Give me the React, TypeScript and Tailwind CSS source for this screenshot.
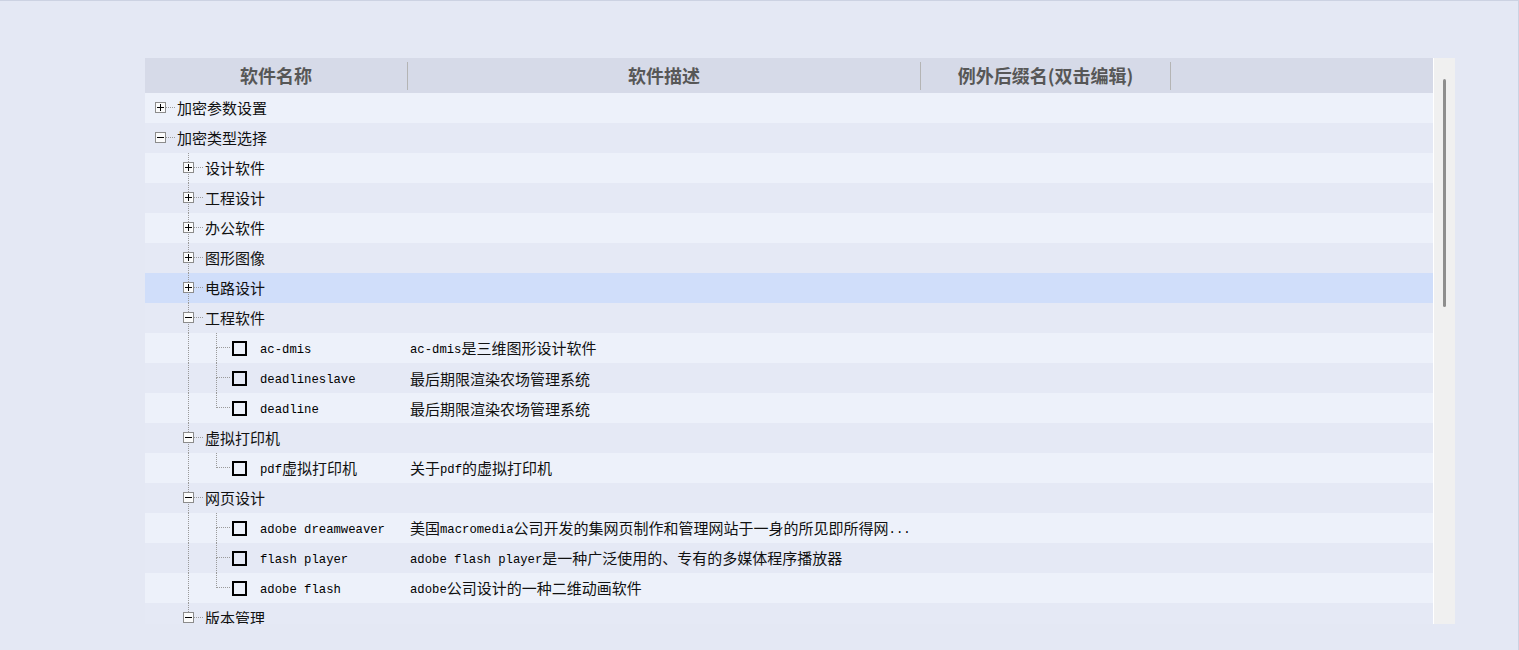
import React from 'react';

type Kind = 'open' | 'closed' | 'leaf';

interface TreeRow {
  name: string;
  desc?: string;
  level: number;
  kind: Kind;
}

const rows: TreeRow[] = [
  { name: '加密参数设置', level: 0, kind: 'closed' },
  { name: '加密类型选择', level: 0, kind: 'open' },
  { name: '设计软件', level: 1, kind: 'closed' },
  { name: '工程设计', level: 1, kind: 'closed' },
  { name: '办公软件', level: 1, kind: 'closed' },
  { name: '图形图像', level: 1, kind: 'closed' },
  { name: '电路设计', level: 1, kind: 'closed' },
  { name: '工程软件', level: 1, kind: 'open' },
  { name: 'ac-dmis', desc: 'ac-dmis是三维图形设计软件', level: 2, kind: 'leaf' },
  { name: 'deadlineslave', desc: '最后期限渲染农场管理系统', level: 2, kind: 'leaf' },
  { name: 'deadline', desc: '最后期限渲染农场管理系统', level: 2, kind: 'leaf' },
  { name: '虚拟打印机', level: 1, kind: 'open' },
  { name: 'pdf虚拟打印机', desc: '关于pdf的虚拟打印机', level: 2, kind: 'leaf' },
  { name: '网页设计', level: 1, kind: 'open' },
  {
    name: 'adobe dreamweaver',
    desc: '美国macromedia公司开发的集网页制作和管理网站于一身的所见即所得网...',
    level: 2,
    kind: 'leaf',
  },
  { name: 'flash player', desc: 'adobe flash player是一种广泛使用的、专有的多媒体程序播放器', level: 2, kind: 'leaf' },
  { name: 'adobe flash', desc: 'adobe公司设计的一种二维动画软件', level: 2, kind: 'leaf' },
  { name: '版本管理', level: 1, kind: 'open' },
];

const SELECTED = 6;

// true when a later row sits at `level` before the tree climbs above it
const continues = (i: number, level: number) => {
  for (let j = i + 1; j < rows.length; j++) {
    if (rows[j].level < level) return false;
    if (rows[j].level === level) return true;
  }
  return false;
};

const DOT = '#9a9a9a';

// one 28px indent column of the tree connector lines
const LineCell: React.FC<{ top?: boolean; bottom?: boolean; branch?: boolean; box?: 'plus' | 'minus' }> = ({
  top,
  bottom,
  branch,
  box,
}) => (
  <svg width="28" height="30" className="shrink-0">
    {top && <line x1="13.5" y1="0" x2="13.5" y2="15" stroke={DOT} strokeDasharray="1 1" />}
    {bottom && <line x1="13.5" y1="15" x2="13.5" y2="30" stroke={DOT} strokeDasharray="1 1" />}
    {branch && <line x1={box ? 19 : 14} y1="14.5" x2="28" y2="14.5" stroke={DOT} strokeDasharray="1 1" />}
    {box && (
      <g>
        <rect x="8.5" y="9.5" width="10" height="10" fill="#fbfbfb" stroke="#8c8c8c" />
        <line x1="10" y1="14.5" x2="17" y2="14.5" stroke="#000" />
        {box === 'plus' && <line x1="13.5" y1="11" x2="13.5" y2="18" stroke="#000" />}
      </g>
    )}
  </svg>
);

// latin runs use the narrow mono face, CJK runs the wider sans face
const Mixed: React.FC<{ text: string }> = ({ text }) => {
  const parts = text.match(/[\x00-\x7f]+|[^\x00-\x7f]+/g) ?? [];
  return (
    <span className="leading-[20px]">
      {parts.map((p, i) =>
        /^[\x00-\x7f]+$/.test(p) ? (
          <span
            key={i}
            className="font-['Liberation_Mono',monospace] text-[12.25px] whitespace-pre text-black align-[1px]"
          >
            {p}
          </span>
        ) : (
          <span key={i} className="text-[15px]">
            {p}
          </span>
        )
      )}
    </span>
  );
};

const HeaderDivider = () => <div className="w-px h-[28px] bg-[#b4b4b4] shrink-0" />;

const App: React.FC = () => {
  return (
    <div className="min-h-[650px] bg-[#e4e8f4] border-t border-r border-[#ccd2e2] pt-[57px] pl-[145px] font-['Noto_Sans_CJK_SC',sans-serif] text-[#111]">
      <div className="flex h-[566px] w-[1310px] overflow-hidden">
        {/* grid */}
        <div className="w-[1288px] flex flex-col">
          <div className="flex items-center h-[35px] bg-[#d6dae8] shrink-0 text-[18px] font-bold text-[#575757]">
            <div className="w-[262px] text-center">软件名称</div>
            <HeaderDivider />
            <div className="w-[512px] text-center">软件描述</div>
            <HeaderDivider />
            <div className="w-[249px] text-center">例外后缀名(双击编辑)</div>
            <HeaderDivider />
            <div className="flex-1" />
          </div>

          {rows.map((r, i) => {
            const bg = i === SELECTED ? 'bg-[#d0defa]' : i % 2 === 0 ? 'bg-[#edf1fa]' : 'bg-[#e5e9f5]';
            const guides = [];
            for (let k = 0; k < r.level; k++) {
              const on = k >= 1 && continues(i, k);
              guides.push(<LineCell key={k} top={on} bottom={on} />);
            }
            const linked = r.level >= 1;
            return (
              <div key={i} className={`flex items-center h-[30px] shrink-0 ${bg}`}>
                <div className="w-[262px] flex items-center pl-[2px] whitespace-nowrap overflow-hidden">
                  {guides}
                  <LineCell
                    top={linked}
                    bottom={linked && continues(i, r.level)}
                    branch
                    box={r.kind === 'leaf' ? undefined : r.kind === 'open' ? 'minus' : 'plus'}
                  />
                  {r.kind === 'leaf' ? (
                    <>
                      <span className="w-[15px] h-[15px] border-2 border-black ml-[1px] shrink-0" />
                      <span className="ml-[13px] leading-[20px]">
                        <Mixed text={r.name} />
                      </span>
                    </>
                  ) : (
                    <span className="ml-[2px] text-[15px]">{r.name}</span>
                  )}
                </div>
                <div className="w-[513px] pl-[3px] whitespace-nowrap overflow-hidden leading-[20px]">
                  {r.desc && <Mixed text={r.desc} />}
                </div>
                <div className="flex-1" />
              </div>
            );
          })}
        </div>

        {/* vertical scrollbar */}
        <div className="w-[22px] border-l border-white bg-[#f0f0f0] shrink-0">
          <div className="w-[3px] h-[228px] mt-[21px] ml-[9px] bg-[#8e8e8e] rounded-sm" />
        </div>
      </div>
    </div>
  );
};

export default App;
